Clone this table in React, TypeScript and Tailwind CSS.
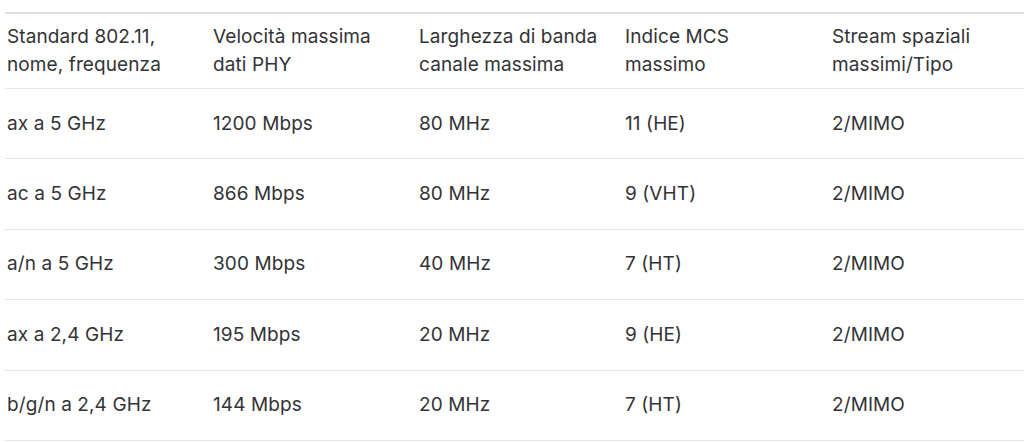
const headers = [
  ['Standard 802.11,', 'nome, frequenza'],
  ['Velocità massima', 'dati PHY'],
  ['Larghezza di banda', 'canale massima'],
  ['Indice MCS', 'massimo'],
  ['Stream spaziali', 'massimi/Tipo'],
];

const rows = [
  ['ax a 5 GHz', '1200 Mbps', '80 MHz', '11 (HE)', '2/MIMO'],
  ['ac a 5 GHz', '866 Mbps', '80 MHz', '9 (VHT)', '2/MIMO'],
  ['a/n a 5 GHz', '300 Mbps', '40 MHz', '7 (HT)', '2/MIMO'],
  ['ax a 2,4 GHz', '195 Mbps', '20 MHz', '9 (HE)', '2/MIMO'],
  ['b/g/n a 2,4 GHz', '144 Mbps', '20 MHz', '7 (HT)', '2/MIMO'],
];

const cols = 'grid grid-cols-[206px_206px_206px_207px_1fr]';

export default function App() {
  return (
    <div className="w-[1024px] h-[442px] bg-white pt-[12px] pl-[5px] text-[#333336] font-['Inter','Liberation_Sans',sans-serif] text-[19px] leading-[28px] tracking-[0.1px]">
      <div className="border-t-2 border-[#dcdcdc]">
        <div className={`${cols} border-b border-[#e6e6e6] py-[9px]`}>
          {headers.map((h, i) => (
            <div key={i} className="pl-[2px]">
              {h[0]}
              <br />
              {h[1]}
            </div>
          ))}
        </div>
        {rows.map((r, i) => (
          <div key={i} className={`${cols} border-b border-[#e6e6e6] py-[20.7px]`}>
            {r.map((c, j) => (
              <div key={j} className="pl-[2px]">
                {c}
              </div>
            ))}
          </div>
        ))}
      </div>
    </div>
  );
}
